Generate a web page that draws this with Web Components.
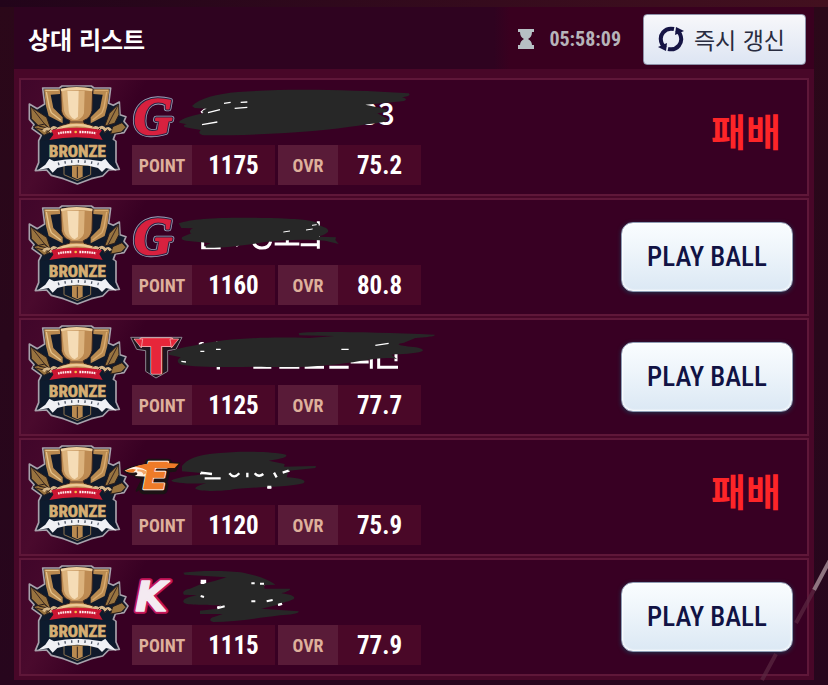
<!DOCTYPE html>
<html lang="ko">
<head>
<meta charset="utf-8">
<meta name="viewport" content="width=device-width, initial-scale=1">
<title>상대 리스트</title>
<style>
  body {
    margin: 0;
    background: #27061d;
    color: #fff;
    font-family: "Noto Sans CJK KR", sans-serif;
    --narrow: "Roboto Condensed", "Liberation Sans Narrow", "Noto Sans CJK KR", sans-serif;
  }
</style>
</head>
<body>
<opponent-list heading="상대 리스트" time="05:58:09">
  <opponent-row team="giants" point="1175" ovr="75.2"><match-result>패배</match-result></opponent-row>
  <opponent-row team="giants-alt" point="1160" ovr="80.8"><play-button>PLAY BALL</play-button></opponent-row>
  <opponent-row team="tigers" point="1125" ovr="77.7"><play-button>PLAY BALL</play-button></opponent-row>
  <opponent-row team="eagles" point="1120" ovr="75.9"><match-result>패배</match-result></opponent-row>
  <opponent-row team="kt" point="1115" ovr="77.9"><play-button>PLAY BALL</play-button></opponent-row>
</opponent-list>

<script>
// creates a template from markup
const html = (markup) => {
  const template = document.createElement('template')
  template.innerHTML = markup
  return template
}

class BaseElement extends HTMLElement {
  constructor () {
    super()
    this.attachShadow({ mode: 'open' })
    this.shadowRoot.appendChild(this.constructor.template.content.cloneNode(true))
  }
}

/* ---------- team plate: logo + covered name ---------- */

const gLogo = `
  <g font-family="Liberation Serif, serif" font-weight="bold" font-style="italic" font-size="160" stroke-linejoin="round">
    <text x="17" y="162" stroke="#9aa0b8" stroke-width="16" fill="#9aa0b8">G</text>
    <text x="17" y="162" stroke="#2b2140" stroke-width="11" fill="#2b2140">G</text>
    <text x="17" y="162" stroke="#d8213f" stroke-width="5" fill="#d8213f">G</text>
  </g>`

const plates = {
  giants: gLogo + `
    <text x="700" y="136" font-family="Noto Sans CJK KR, sans-serif" font-weight="500" font-size="88" fill="#fff">33</text>
    <path d="M220 98l26-22M288 70h22M340 66h22M222 134l46-8" stroke="#fff" stroke-width="8"/>
    <path d="M192 78C215 55 265 42 330 36C470 26 640 28 842 40C850 46 838 50 822 52C838 56 838 62 822 64L712 74L776 88C782 96 765 98 748 100L778 116C780 130 740 128 690 137C590 152 430 166 230 166C214 164 210 158 218 150L172 142C164 138 168 134 176 133L154 128C150 122 170 112 228 99C218 96 224 90 236 86L200 84Z" fill="#272727"/>
    <path d="M240 98l36-9M320 85l38-3M288 70l20-3M338 67l20-1M222 134l46-8" stroke="#fff" stroke-width="4" fill="none"/>`,
  'giants-alt': gLogo + `
    <path d="M224 126V143H278M318 124l12 14M376 124q4 20 26 20t26-20M440 132h74M478 118v14M518 134h50M571 64v82" stroke="#fff" stroke-width="9" fill="none"/>
    <path d="M152 70C200 52 330 50 480 56C540 58 580 66 571 76C596 82 608 92 596 99C588 106 574 108 572 110L624 112L622 120L632 132L592 122C520 116 470 120 410 126C340 138 280 144 234 143C228 138 240 132 250 130L174 122C158 120 158 112 168 109L190 100C182 96 186 88 196 85L160 84Z" fill="#272727"/>
    <path d="M466 96l20-3M534 90l20-3M552 76l14-2" stroke="#fff" stroke-width="3"/>`,
  tigers: `
    <path d="M8 52H162L144 88L119 92V154L84 174L53 154V92L26 88Z" fill="#20151f" stroke="#8b8590" stroke-width="3"/>
    <g font-family="DejaVu Sans, sans-serif" font-weight="bold" font-size="136" text-anchor="middle" stroke-linejoin="round">
      <text x="85" y="158" fill="#f3c5c5" stroke="#f3c5c5" stroke-width="9">T</text>
      <text x="85" y="158" fill="#e6263a" stroke="#e6263a" stroke-width="4">T</text>
    </g>
    <path d="M18 57L44 57L40 84ZM152 57L126 57L130 84Z" fill="#e6263a" stroke="#f3c5c5" stroke-width="2"/>
    <path d="M217 68v28M270 66l-16 16M266 144h10M376 142h54M454 142h60M530 142h58M604 142h58M668 126h54M730 108v38M752 106v36h58M804 68v56" stroke="#fff" stroke-width="9" fill="none"/>
    <path d="M512 40C520 34 700 34 920 44C924 50 880 52 862 54L828 68C800 72 810 76 848 80C880 82 890 90 882 94C860 102 820 102 790 104L808 118C790 110 750 114 700 122C620 136 540 144 400 140C300 142 200 142 160 134C146 128 146 120 158 112L122 104C116 94 150 84 210 74C290 56 400 50 544 54L620 48L514 46Z" fill="#272727"/>
    <path d="M640 88h22M742 76l40-6M160 124l14 2M217 68h10M217 94h12M264 88h14" stroke="#fff" stroke-width="4"/>`,
  eagles: `
    <g transform="translate(-24 0)">
      <g font-family="DejaVu Sans, sans-serif" font-weight="bold" font-style="italic" font-size="112" stroke-linejoin="round">
        <text x="68" y="150" stroke="#1b1214" stroke-width="26" fill="#1b1214">E</text>
        <path d="M12 92C50 72 110 68 178 70L166 92L104 98L88 130L50 152L68 116L46 110L58 104Q34 108 12 92Z" fill="#241413" stroke="#1b1214" stroke-width="6"/>
        <text x="68" y="148" stroke="#fff0e2" stroke-width="7" fill="#fff0e2">E</text>
        <path d="M14 92C52 74 90 70 126 72L104 90L84 110L44 108Q58 102 48 97Q30 100 14 92Z" fill="#fff0e2"/>
        <text x="68" y="148" fill="#ee7b28" stroke="#ee7b28" stroke-width="2">E</text>
        <path d="M44 80C78 68 132 67 176 71L164 84H96L84 94Q72 84 44 80ZM15 92Q36 84 48 89L40 97Q24 98 15 92Z" fill="#ee7b28"/>
        <path d="M52 88Q74 88 82 98L70 104Q68 94 52 94Z" fill="#f3a668"/>
      </g>
      <path d="M240 100h62M254 114h50M330 100q0 12 14 12t18-10M382 96v16M402 100q8 14 30 2M460 94l10 18M486 102l22-12M442 142h12" stroke="#fff" stroke-width="9" fill="none"/>
      <path d="M186 78C200 60 230 44 290 40C360 32 450 34 498 44C506 54 470 58 446 62L494 72L492 80L588 78L586 84L506 92L500 112C550 114 560 124 550 130C500 144 370 140 330 150C290 154 240 154 226 146C226 138 250 132 260 130C200 132 160 128 154 122C166 112 220 106 260 102L236 98L186 94Z" fill="#272727"/>
      <path d="M242 98l34 4M254 115h48M328 100q14 18 30 0M382 98v14M404 100q12 14 26 2M462 98l8 14M488 98l18-6M442 141h12" stroke="#fff" stroke-width="7" fill="none"/>
    </g>`,
  kt: `
    <g transform="translate(-24 0)">
      <g font-family="DejaVu Sans, sans-serif" font-weight="bold" font-style="italic" font-size="124" stroke-linejoin="round">
        <text x="46" y="154" stroke="#c4175a" stroke-width="16" fill="#c4175a">K</text>
        <text x="46" y="154" stroke="#f4eaf1" stroke-width="4" fill="#f4eaf1">K</text>
      </g>
      <path d="M242 64h12v12M398 64v14M428 66v12M242 106h12M292 144l24-6M394 124h14M430 126l28-7M474 134l12-3" stroke="#fff" stroke-width="9" fill="none"/>
      <path d="M190 38C240 30 330 32 370 38C410 46 450 60 466 74L432 76L434 86L510 86C512 92 496 96 484 100C520 104 528 112 520 118C500 128 480 128 474 134L424 146L536 154C538 162 510 164 480 166C400 176 340 186 280 186C266 182 268 174 284 170L308 162H240V152L290 146L304 136C260 134 200 136 192 128C184 120 200 112 230 106L192 104C184 96 196 88 210 86L238 74L286 62L320 52L194 44Z" fill="#272727"/>
      <path d="M242 69h11M394 124h12M440 124l18-4M394 70h10M420 71h12M242 108l10 3M292 145l22-6M474 134l12-3" stroke="#fff" stroke-width="6" fill="none"/>
    </g>`
}

customElements.define('team-plate', class extends HTMLElement {
  static get observedAttributes () {
    return ['team']
  }

  constructor () {
    super()
    this.attachShadow({ mode: 'open' })
  }

  attributeChangedCallback (name, oldValue, newValue) {
    this.shadowRoot.innerHTML = `
      <style>
        :host { display: block; height: 65px; }
        svg { display: block; width: 320px; height: 65px; overflow: visible; }
      </style>
      <svg viewBox="0 0 960 195" aria-hidden="true">${plates[newValue]}</svg>`
  }
})

/* ---------- bronze crest ---------- */

customElements.define('bronze-crest', class extends BaseElement {
  static template = html(`
    <style>
      :host { display: block; width: 100px; height: 100px; }
      svg { display: block; overflow: visible; }
    </style>
    <svg width="100" height="100" viewBox="42 27 300 300" role="img" aria-label="BRONZE">
      <!-- outline -->
      <path d="M86 36H136L144 30H232L240 36H290L284 82L298 88L316 78L318 116L336 122L330 136L342 150L330 170L304 174L298 190L306 196V258L316 280L284 282L266 300L232 308L190 324L148 308L112 298L98 282L64 284L74 260V194L82 178L54 158L60 146L46 130V84L70 98L92 84Z" fill="#101a2b" stroke="#a8a2ac" stroke-width="5" stroke-linejoin="round"/>
      <!-- leaves -->
      <path d="M50 92L98 124L110 158L74 150L52 128ZM58 152L92 144L116 166L90 178ZM314 84L286 112L272 150L302 142L315 116ZM296 152L324 140L336 154L322 168L290 174Z" fill="#98733f" stroke="#2a1c1a" stroke-width="3"/>
      <path d="M54 96L98 152M312 88L282 146M66 156L104 166" stroke="#3c2820" stroke-width="3"/>
      <!-- handles -->
      <path d="M90 40H138V54L110 56L118 96L146 124V142L104 120L96 90ZM286 40H238V54L266 56L258 96L230 124V142L272 120L280 90Z" fill="#b98a50"/>
      <path d="M94 43H134M97 48L106 94L112 110L140 132" fill="none" stroke="#e6c48d" stroke-width="4"/>
      <path d="M282 43H242M278 48L270 94L264 110L236 132" fill="none" stroke="#d9ac70" stroke-width="4"/>
      <!-- cup -->
      <path d="M140 38Q188 28 236 38L234 104Q230 126 208 134L210 142L238 150V162H136V150L166 142L168 134Q146 126 142 104Z" fill="#bd8a52" stroke="#3a251d" stroke-width="3"/>
      <path d="M144 44H212L210 112Q204 128 190 132H176Q154 122 150 104Z" fill="#dcb27c"/>
      <path d="M160 44H194L192 122L182 130Q166 122 164 104Z" fill="#f5dcb6"/>
      <path d="M140 38Q188 28 236 38L235 46Q188 38 141 46Z" fill="#efcf9f"/>
      <path d="M142 154Q188 140 234 154" fill="none" stroke="#ecc995" stroke-width="7"/>
      <path d="M168 138H208" stroke="#5b3a26" stroke-width="3"/>
      <!-- laurels under the handles -->
      <path d="M88 166q10-14 22-2q8-18 20-3q8-9 14 2M234 162q10-14 20-2q10-14 20 2q10-10 16 2" fill="none" stroke="#d7b78a" stroke-width="9"/>
      <path d="M96 172l14-12M114 170l14-14M246 168l12-12M268 172l14-12" stroke="#33221e" stroke-width="3"/>
      <!-- red ribbon -->
      <path d="M112 162Q188 148 264 162L256 174L266 192Q188 176 106 192L118 176Z" fill="#cc1632"/>
      <path d="M132 172Q152 168 174 168M196 168Q224 168 246 172" stroke="#ffe9e9" stroke-width="7" stroke-dasharray="5 2" fill="none"/>
      <circle cx="185" cy="168" r="4" fill="#f6bd42"/>
      <!-- name board -->
      <path d="M80 194Q188 184 302 194V262L280 272H104L80 260Z" fill="#0d1b2e"/>
      <text x="190" y="244" text-anchor="middle" font-family="Roboto Condensed, Liberation Sans, sans-serif" font-weight="bold" font-size="51" fill="#d6ae73" stroke="#d6ae73" stroke-width="2">BRONZE</text>
      <path d="M150 268H230V296L190 314L150 296Z" fill="#0d1b2e" stroke="#8c7450" stroke-width="3"/>
      <path d="M174 270H206V302L190 310L174 302Z" fill="#b98a50"/>
      <path d="M190 272V306" stroke="#30221f" stroke-width="3"/>
      <!-- white ribbon -->
      <path d="M72 282L94 266L106 248L120 256Q188 240 262 256L274 248L286 264L308 284L276 276L264 288L252 276Q190 256 130 276L116 290L104 276Z" fill="#f0f1f5"/>
      <path d="M132 264Q188 248 254 264" fill="none" stroke="#4a5262" stroke-width="8" stroke-dasharray="4 16"/>
    </svg>
  `)
})

/* ---------- stat box ---------- */

customElements.define('stat-box', class extends BaseElement {
  static template = html(`
    <style>
      :host {
        display: flex;
        height: 40px;
        font-family: var(--narrow);
        font-weight: bold;
        line-height: 42px;
        text-align: center;
        white-space: nowrap;
      }
      .label { width: 60px; background: #591b38; color: #deb09b; font-size: 18px; }
      .value { width: 83px; background: #4a0828; color: #fff; font-size: 25px; }
    </style>
    <span class="label"></span>
    <span class="value"></span>
  `)

  static get observedAttributes () {
    return ['label', 'value']
  }

  attributeChangedCallback (name, oldValue, newValue) {
    this.shadowRoot.querySelector('.' + name).textContent = newValue
  }
})

/* ---------- row actions ---------- */

customElements.define('play-button', class extends BaseElement {
  static template = html(`
    <style>
      :host { display: block; }
      button {
        display: block;
        width: 172px;
        height: 70px;
        padding: 0;
        border: 1px solid #8f9db5;
        border-radius: 12px;
        background: linear-gradient(#fafdff, #edf4fa 45%, #dbe8f4);
        box-shadow: inset 0 0 2px 1px #fff, 0 1px 4px #21324c;
        color: #111344;
        font: 500 27px var(--narrow);
        white-space: nowrap;
        cursor: pointer;
      }
    </style>
    <button type="button"><slot></slot></button>
  `)
})

customElements.define('match-result', class extends BaseElement {
  static template = html(`
    <style>
      :host {
        display: block;
        padding: 0 12px 14px 0;
        color: #fd2528;
        font-size: 38px;
        font-weight: bold;
        line-height: 48px;
      }
    </style>
    <slot></slot>
  `)
})

/* ---------- opponent row ---------- */

customElements.define('opponent-row', class extends BaseElement {
  static template = html(`
    <style>
      :host {
        display: flex;
        box-sizing: border-box;
        height: 118px;
        padding: 0 14px 0 7px;
        border: 2px solid #5f1739;
        background: linear-gradient(120deg, #40062a, #4a0a2d 60px, #380023 110px);
      }
      bronze-crest { margin-top: 5px; }
      .info { flex: 1; }
      .stats { display: flex; gap: 3px; margin-left: 4px; }
      .action { display: flex; align-items: center; }
    </style>
    <bronze-crest></bronze-crest>
    <div class="info">
      <team-plate></team-plate>
      <div class="stats">
        <stat-box label="POINT"></stat-box>
        <stat-box label="OVR"></stat-box>
      </div>
    </div>
    <div class="action"><slot></slot></div>
  `)

  connectedCallback () {
    const [point, ovr] = this.shadowRoot.querySelectorAll('stat-box')
    this.shadowRoot.querySelector('team-plate').setAttribute('team', this.getAttribute('team'))
    point.setAttribute('value', this.getAttribute('point'))
    ovr.setAttribute('value', this.getAttribute('ovr'))
  }
})

/* ---------- list panel ---------- */

customElements.define('opponent-list', class extends BaseElement {
  static template = html(`
    <style>
      :host {
        display: block;
        position: relative;
        overflow: hidden;
        padding: 7px 14px 5px;
        background: linear-gradient(90deg, #22041a, #43101f) top / 100% 7px no-repeat,
          linear-gradient(#2b0819, #27061d);
      }
      header {
        display: flex;
        align-items: center;
        box-sizing: border-box;
        height: 62px;
        padding: 2px 8px 0 14px;
        background: linear-gradient(90deg, #2f0320 60%, #39001f 62%);
      }
      h1 { flex: 1; margin: 0; font-size: 24px; font-weight: bold; line-height: 36px; }
      .timer { display: flex; align-items: center; gap: 15px; margin-right: 22px; color: #b7b4ba; font: bold 20px var(--narrow); }
      .refresh {
        display: flex;
        align-items: center;
        justify-content: center;
        gap: 10px;
        width: 163px;
        height: 51px;
        padding: 0 6px 0 0;
        border: 1px solid #8d91a8;
        border-radius: 4px;
        background: linear-gradient(#f7f7fa, #dde5f3);
        color: #292c40;
        font: 23px "Noto Sans CJK KR", sans-serif;
        white-space: nowrap;
        cursor: pointer;
      }
      .rows { display: flex; flex-direction: column; gap: 2px; padding: 9px 5px 4px; background: #480728; }
      .streak { position: absolute; right: 0; top: 560px; pointer-events: none; }
    </style>
    <header>
      <h1></h1>
      <div class="timer">
        <svg width="16" height="22" viewBox="0 0 16 22" aria-hidden="true">
          <path d="M0 1h16v3h-2c0 4-2 6-4 7c2 1 4 3 4 6h2v4H0v-4h2c0-3 2-5 4-6C4 10 2 8 2 4H0Z" fill="#b7c0c4"/>
        </svg>
        <span class="time"></span>
      </div>
      <button class="refresh" type="button">
        <svg width="26" height="26" viewBox="0 0 26 26" aria-hidden="true">
          <g fill="none" stroke="#161545" stroke-width="4">
            <path d="M16 3C7 1 0 9 4 18L7 22"/>
            <path d="M10 23C19 25 26 17 22 8L19 4"/>
          </g>
          <path d="M0 21L9 17L8 25ZM26 5L17 9L18 1Z" fill="#161545"/>
        </svg>
        즉시 갱신
      </button>
    </header>
    <div class="rows"><slot></slot></div>
    <svg class="streak" width="70" height="125" viewBox="0 0 70 125" aria-hidden="true">
      <path d="M72 0L56 30" stroke="#8f7480" stroke-width="4"/>
      <path d="M56 30L38 63M18 94L4 120" stroke="#5b2842" stroke-width="4" opacity=".7"/>
    </svg>
  `)

  connectedCallback () {
    this.shadowRoot.querySelector('h1').textContent = this.getAttribute('heading')
    this.shadowRoot.querySelector('.time').textContent = this.getAttribute('time')
  }
})
</script>
</body>
</html>
